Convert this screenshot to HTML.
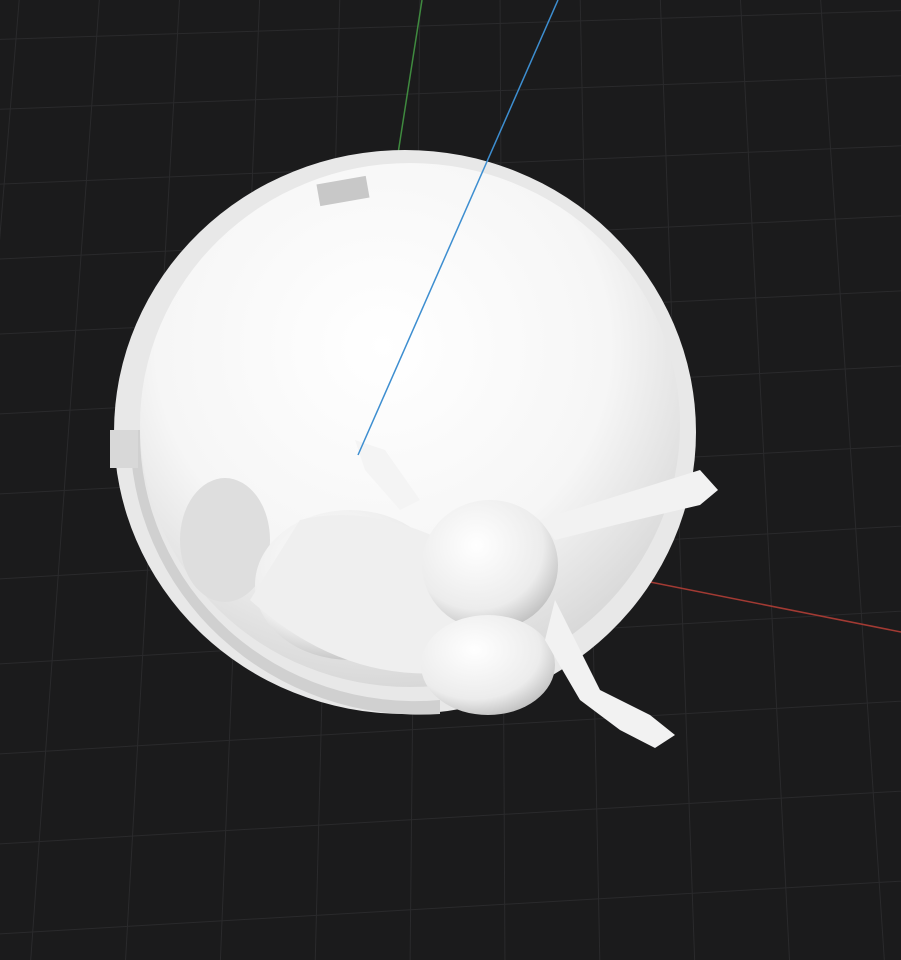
<!DOCTYPE html>
<html><head><style>html,body{margin:0;padding:0;width:901px;height:960px;background:#1b1b1c;overflow:hidden}svg{display:block}</style></head>
<body>
<svg width="901" height="960" viewBox="0 0 901 960" xmlns="http://www.w3.org/2000/svg" style="position:absolute;top:0;left:0">
<defs>
<radialGradient id="inner" cx="0.45" cy="0.35" r="0.7">
<stop offset="0" stop-color="#ffffff"/><stop offset="0.6" stop-color="#f6f6f6"/><stop offset="1" stop-color="#d2d2d2"/>
</radialGradient>
<radialGradient id="blob" cx="0.4" cy="0.35" r="0.7">
<stop offset="0" stop-color="#ffffff"/><stop offset="0.7" stop-color="#ececec"/><stop offset="1" stop-color="#bdbdbd"/>
</radialGradient>
</defs>
<rect width="901" height="960" fill="#1b1b1c"/>
<g stroke="#2a2a2c" stroke-width="1">
<path d="M-20 40 L920 10 M-20 110 L920 75 M-20 185 L920 145 M-20 260 L920 215 M-20 335 L920 290 M-20 415 L920 365 M-20 495 L920 445 M-20 580 L920 525 M-20 665 L920 610 M-20 755 L920 700 M-20 845 L920 790 M-20 935 L920 880"/>
<path d="M20 -10 L-60 970 M100 -10 L30 970 M180 -10 L125 970 M260 -10 L220 970 M340 -10 L315 970 M420 -10 L410 970 M500 -10 L505 970 M580 -10 L600 970 M660 -10 L695 970 M740 -10 L790 970 M820 -10 L885 970"/>
</g>
<line x1="422" y1="0" x2="397" y2="160" stroke="#3f8a3f" stroke-width="1.5"/>
<line x1="640" y1="580" x2="901" y2="632" stroke="#a23a33" stroke-width="1.5"/>
<ellipse cx="405" cy="432" rx="291" ry="282" fill="#e8e8e8"/>
<path d="M130 430 A290 282 0 0 0 440 714 L440 700 A275 268 0 0 1 140 430 Z" fill="#d0d0d0"/>
<ellipse cx="410" cy="425" rx="270" ry="262" fill="url(#inner)"/>
<rect x="318" y="180" width="50" height="22" fill="#c8c8c8" transform="rotate(-10 343 191)"/>
<rect x="110" y="430" width="28" height="38" fill="#d8d8d8"/>
<ellipse cx="225" cy="540" rx="45" ry="62" fill="#dedede"/>
<ellipse cx="350" cy="585" rx="95" ry="75" fill="url(#blob)"/>
<path d="M250 600 Q350 690 470 670 L480 560 Q380 500 300 520 Z" fill="#efefef"/>
<ellipse cx="490" cy="565" rx="68" ry="65" fill="url(#blob)"/>
<ellipse cx="488" cy="665" rx="67" ry="50" fill="url(#blob)"/>
<path d="M540 520 L620 495 L700 470 L718 490 L700 505 L615 525 L555 540 Z" fill="#f2f2f2"/>
<path d="M555 600 L600 690 L650 715 L675 735 L655 748 L620 730 L580 700 L545 640 Z" fill="#f2f2f2"/>
<path d="M355 440 L385 450 L420 500 L400 510 L365 470 Z" fill="#f4f4f4"/>
<line x1="558" y1="0" x2="358" y2="455" stroke="#3d8ed0" stroke-width="1.5"/>
</svg>
</body></html>
